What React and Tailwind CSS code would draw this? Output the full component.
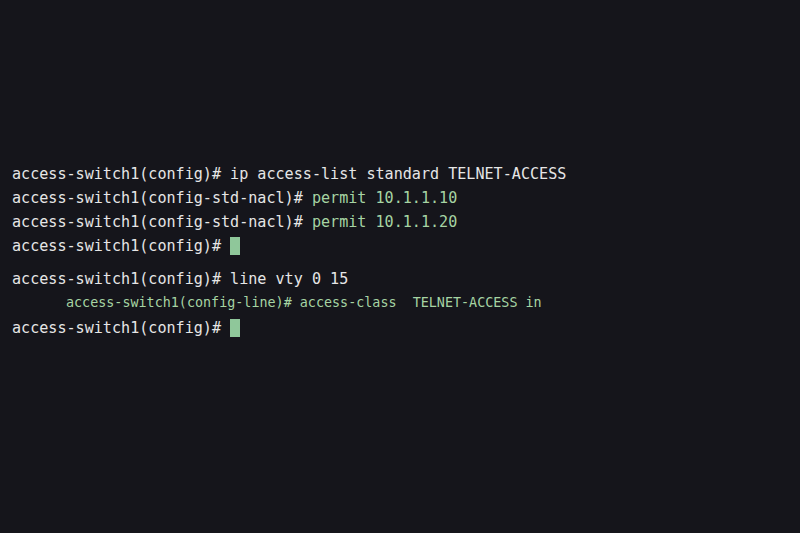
export default function App() {
  const mono = { fontFamily: '"DejaVu Sans Mono", "Liberation Mono", monospace' };
  return (
    <div className="w-[800px] h-[533px] bg-[#15151b] overflow-hidden pt-[162px] pl-[12px] text-[#e6e6e6] text-[15.1px] leading-[24px]" style={mono}>
      <div className="whitespace-pre">access-switch1(config)# ip access-list standard TELNET-ACCESS</div>
      <div className="whitespace-pre">access-switch1(config-std-nacl)# <span className="text-[#a6d4a3]">permit 10.1.1.10</span></div>
      <div className="whitespace-pre">access-switch1(config-std-nacl)# <span className="text-[#a6d4a3]">permit 10.1.1.20</span></div>
      <div className="whitespace-pre flex items-center">access-switch1(config)# <span className="inline-block w-[10px] h-[18px] bg-[#8fc79a]"></span></div>
      <div className="whitespace-pre mt-[9px]">access-switch1(config)# line vty 0 15</div>
      <div className="whitespace-pre pl-[54px] text-[13.4px] text-[#a6d4a3] leading-[22px] mt-[1px]">access-switch1(config-line)# access-class  TELNET-ACCESS in</div>
      <div className="whitespace-pre flex items-center mt-[2px]">access-switch1(config)# <span className="inline-block w-[10px] h-[18px] bg-[#8fc79a]"></span></div>
    </div>
  );
}
